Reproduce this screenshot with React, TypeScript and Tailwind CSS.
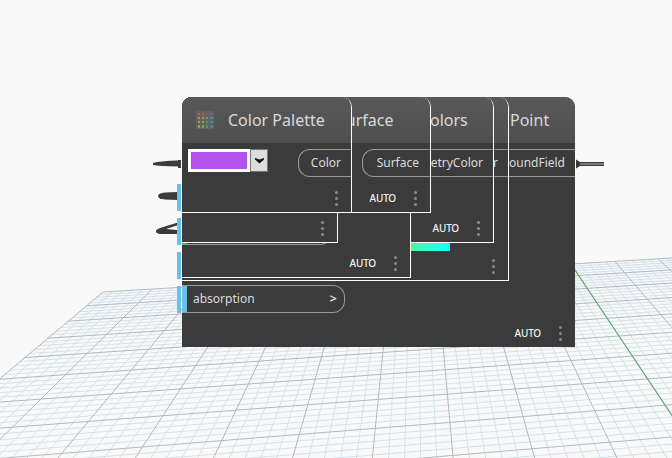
import type { ReactNode } from "react";

const FONT = "font-['Noto_Sans',sans-serif]";

// ground plane grid, projected from two vanishing points
const V1 = { x: 415, y: 30 };
const V2 = { x: 8000, y: -180 };
const O = { x: 103, y: 292 };

function project(col: number, row: number) {
  const u = col * 0.0063;
  const v = row * -0.05;
  const w = 1 + u + v;
  return {
    x: (O.x + u * V2.x + v * V1.x) / w,
    y: (O.y + u * V2.y + v * V1.y) / w,
  };
}

function line(c1: number, r1: number, c2: number, r2: number) {
  const a = project(c1, r1);
  const b = project(c2, r2);
  return `M${a.x.toFixed(1)} ${a.y.toFixed(1)}L${b.x.toFixed(1)} ${b.y.toFixed(1)}`;
}

const COLS = 20;
const ROWS = 14;
const STEP = 5;
const minorCols: string[] = [];
const minorRows: string[] = [];
const major: string[] = [];
for (let i = 0; i <= COLS * STEP; i++) {
  (i % STEP === 0 ? major : minorCols).push(line(i / STEP, 0, i / STEP, ROWS));
}
for (let i = 0; i <= ROWS * STEP; i++) {
  (i % STEP === 0 ? major : minorRows).push(line(0, i / STEP, COLS, i / STEP));
}

function Grid() {
  return (
    <svg className="absolute inset-0" width="672" height="458" fill="none">
      <path d={minorCols.join("")} stroke="#d2e3ee" strokeWidth="1" />
      <path d={minorRows.join("")} stroke="#d3e2ea" strokeWidth="1" />
      <path d={major.join("")} stroke="#aebac1" strokeWidth="1" />
      <path d={line(10, 0, 10, ROWS)} stroke="#5fae6a" strokeWidth="1.2" />
    </svg>
  );
}

function Wires() {
  return (
    <svg className="absolute inset-0" width="672" height="458" fill="#3b3b3b">
      <path d="M153 163q6 -2 25 -2.500V160h3v8h-3v-1.500q-19 -.5 -25 -1.500z" />
      <path d="M178 192v8l-13 -.5q-7 -.5 -7 -3.500t7 -3.500z" />
      <path d="M177 222.700L160 228Q155 230 156 232Q157 234 162 234H177V230L166 229L177 225.500z" />
      <path d="M576 159.500l4 2.500h24v4h-24l-4 2.500z" />
      <path d="M580 163.500h24v1h-24z" fill="#bdbdbd" />
    </svg>
  );
}

function Kebab() {
  return (
    <div className="flex w-[3px] flex-col gap-[3px]">
      <span className="size-[3px] rounded-full bg-[#8a8a8a]" />
      <span className="size-[3px] rounded-full bg-[#8a8a8a]" />
      <span className="size-[3px] rounded-full bg-[#8a8a8a]" />
    </div>
  );
}

const PALETTE = [
  "#c9685a", "#c76a58", "#c94a4a", "#8b4f9a",
  "#d89a4a", "#d0a845", "#6fb060", "#4090cc",
  "#b8b840", "#9ec04a", "#50b070", "#3a90a8",
  "#a0b040", "#88b045", "#50a060", "#4a8a70",
];

function PaletteIcon() {
  return (
    <div className="grid size-[18px] shrink-0 grid-cols-4 gap-[1px] bg-[#626262] p-[1px]">
      {PALETTE.map((c, i) => (
        <span key={i} className="m-[0.5px] rounded-[1px]" style={{ backgroundColor: c }} />
      ))}
    </div>
  );
}

type NodeProps = {
  box: string;
  title?: string;
  titleClass?: string;
  icon?: ReactNode;
  top?: ReactNode;
  bottom?: ReactNode;
  auto?: boolean;
  outline?: boolean;
};

function GraphNode({ box, title, titleClass, icon, top, bottom, auto = true, outline = true }: NodeProps) {
  return (
    <div
      className={`absolute left-[182px] top-[97px] flex flex-col overflow-hidden rounded-t-[10px] bg-[#3b3b3b] ${
        outline ? "border-r border-b border-white" : ""
      } ${box}`}
    >
      <div className="flex h-[46px] shrink-0 items-center gap-[14px] bg-gradient-to-b from-[#585858] to-[#4f4f4f] pl-[14px]">
        {icon}
        {title && <span className={`text-[16px] text-[#d9d9d9] ${titleClass ?? ""}`}>{title}</span>}
      </div>
      <div className="flex min-h-0 flex-1 flex-col justify-between">
        <div className="flex items-start justify-between pt-[6px]">{top}</div>
        {bottom}
      </div>
      <div className="flex h-[30px] shrink-0 items-center justify-end gap-[18px] pr-[13px] pt-[2px]">
        {auto && <span className="text-[10px] font-medium tracking-[-0.2px] text-[#f2f2f2]">AUTO</span>}
        <Kebab />
      </div>
    </div>
  );
}

function Output({ label, className }: { label: string; className: string }) {
  return (
    <div className={`flex h-[28px] items-center justify-end rounded-l-[12px] border border-r-0 border-[#9a9a9a] text-[12px] text-[#dcdcdc] ${className}`}>
      {label}
    </div>
  );
}

function Port({ className }: { className: string }) {
  return <div className={`absolute left-[177px] w-[4px] bg-[#6ac0e7] ${className}`} />;
}

function ColorPicker() {
  return (
    <div className="ml-[6px] flex h-[23px]">
      <div className="h-full w-[62px] border-[3px] border-white bg-[#b452ec]" />
      <div className="flex h-full w-[18px] items-center justify-center border border-[#777] bg-[#dcdcdc]">
        <svg width="9" height="6" viewBox="0 0 9 6">
          <path d="M0 0L4.500 1.500L9 0V1.500L4.500 5.500L0 1.500z" fill="#111" />
        </svg>
      </div>
    </div>
  );
}

export default function App() {
  return (
    <div className={`relative h-[458px] w-[672px] overflow-hidden bg-[#f9f9f9] ${FONT}`}>
      <Grid />
      <Wires />
      <Port className="top-[184px] h-[27px]" />
      <Port className="top-[218px] h-[27px]" />
      <Port className="top-[252px] h-[27px]" />
      <Port className="top-[286px] h-[27px]" />

      {/* nodes are stacked on the canvas, back to front */}
      <GraphNode
        box="h-[250px] w-[393px]"
        title="Point"
        titleClass="pl-[314px]"
        top={<Output label="oundField" className="ml-auto w-[160px] pr-[10px]" />}
        bottom={
          <div className="mb-[4px] flex h-[28px] w-[163px] items-center justify-between rounded-r-[12px] border border-l-0 border-[#9a9a9a] pr-[7px] text-[12px] text-[#dcdcdc]">
            <div className="flex h-full items-center gap-[6px]">
              <span className="h-full w-[5px] bg-[#6ac0e7]" />
              absorption
            </div>
            <span className="text-[13px] font-semibold">&gt;</span>
          </div>
        }
        outline={false}
      />
      <GraphNode
        box="h-[184px] w-[327px]"
        top={<Output label="r" className="ml-auto w-[80px] pr-[10px]" />}
        bottom={<div className="-mb-[1px] ml-[229px] h-[8px] w-[39px] bg-gradient-to-r from-[#50f0a0] to-[#00ffff]" />}
        auto={false}
      />
      <GraphNode
        box="h-[146px] w-[312px]"
        title="olors"
        titleClass="pl-[234px]"
        top={<Output label="etryColor" className="ml-auto w-[130px] pr-[10px]" />}
      />
      <GraphNode
        box="h-[181px] w-[229px]"
        bottom={
          <div className="mb-[2px] flex h-[28px] w-[150px] overflow-hidden rounded-r-[12px] border border-l-0 border-[#9a9a9a]">
            <span className="mt-auto h-[2px] w-[5px] bg-[#ef5350]" />
          </div>
        }
      />
      <GraphNode box="h-[146px] w-[156px]" auto={false} />
      <GraphNode
        box="h-[116px] w-[249px]"
        title="Surface"
        titleClass="pl-[141px]"
        top={<Output label="Surface" className="ml-auto w-[68px] pr-[11px]" />}
      />
      <GraphNode
        box="h-[116px] w-[170px]"
        icon={<PaletteIcon />}
        title="Color Palette"
        top={
          <>
            <ColorPicker />
            <Output label="Color" className="w-[53px] pr-[10px]" />
          </>
        }
        auto={false}
      />
    </div>
  );
}
